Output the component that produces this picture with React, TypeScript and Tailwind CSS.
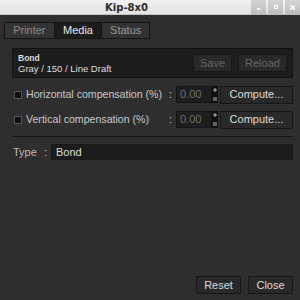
import React from "react";

function Spin({ value }: { value: string }) {
  return (
    <div className="flex h-[17px] shrink-0">
      <div className="w-[36px] h-full bg-[#1e1e1e] border border-[#141414] flex items-center pl-[3px] text-[11px] text-[#6e6e6e]">
        {value}
      </div>
      <div className="w-[6px] h-full bg-[#0e0e0e] flex flex-col items-center justify-between py-[2px]">
        <svg width="4" height="4" viewBox="0 0 4 4"><path d="M0 2H4M2 0V4" stroke="#bbb" strokeWidth="1" /></svg>
        <svg width="4" height="4" viewBox="0 0 4 4"><path d="M0 1H4M0 3H4" stroke="#bbb" strokeWidth="1" /></svg>
      </div>
    </div>
  );
}

function Btn({ children, w, dim }: { children: React.ReactNode; w: string; dim?: boolean }) {
  return (
    <div
      className={`${w} shrink-0 h-[18px] flex items-center justify-center bg-[#292929] border border-[#161616] text-[11px] whitespace-nowrap ${dim ? "text-[#666]" : "text-[#dcdcdc]"}`}
    >
      {children}
    </div>
  );
}

export default function App() {
  return (
    <div
      className="w-[300px] h-[300px] flex flex-col overflow-hidden"
      style={{ fontFamily: '"Liberation Sans", Arial, sans-serif' }}
    >
      {/* title bar */}
      <div className="h-[15px] bg-gradient-to-b from-[#f2f2f2] to-[#e2e2e2] flex items-center border-b border-[#c4c4c4]">
        <div className="flex-1 text-center text-[10px] font-semibold text-[#2a2a2a] pl-[2px]" style={{ fontFamily: '"DejaVu Sans", sans-serif' }}>
          Kip-8x0
        </div>
        <div className="h-[15px] flex gap-[2px]">
          {["min", "max", "close"].map((k) => (
            <div key={k} className="w-[15px] h-[15px] bg-gradient-to-b from-[#d4d4d4] to-[#bcbcbc] flex items-center justify-center">
              {k === "min" && <div className="w-[3px] h-[2px] bg-white mt-[4px]" />}
              {k === "max" && <div className="w-[4px] h-[4px] border border-white" />}
              {k === "close" && (
                <svg width="5" height="5" viewBox="0 0 5 5"><path d="M0 0L5 5M5 0L0 5" stroke="#fff" strokeWidth="1.3" /></svg>
              )}
            </div>
          ))}
        </div>
      </div>

      {/* body */}
      <div className="flex-1 bg-[#2e2e2e] flex flex-col px-[4px] pt-[7px] pb-[6px] text-[#c8c8c8]">
        {/* tabs */}
        <div className="flex w-[146px] h-[17px] border border-[#141414] bg-[#141414] gap-[1px]">
          <div className="w-[49px] flex items-center justify-center bg-[#333] text-[11px] text-[#8a8a8a]">Printer</div>
          <div className="w-[47px] flex items-center justify-center bg-[#1c1c1c] text-[11px] text-[#e8e8e8]">Media</div>
          <div className="w-[47px] flex items-center justify-center bg-[#333] text-[11px] text-[#9a9a9a]">Status</div>
        </div>

        <div className="ml-[8px] mr-[3px] flex flex-col flex-1">
          {/* header box */}
          <div className="mt-[9px] h-[30px] bg-[#1d1d1d] border border-[#111] flex items-center pl-[5px] pr-[5px]">
            <div className="flex-1 flex flex-col leading-[9px]">
              <span className="text-[8.5px] font-bold text-[#ddd]">Bond</span>
              <span className="text-[9.5px] text-[#ddd] mt-[1px]">Gray / 150 / Line Draft</span>
            </div>
            <div className="flex gap-[6px]">
              <Btn w="w-[39px]" dim>Save</Btn>
              <Btn w="w-[49px]" dim>Reload</Btn>
            </div>
          </div>

          {/* rows */}
          <div className="mt-[8px] flex items-center h-[17px]">
            <div className="w-[8px] h-[8px] shrink-0 bg-[#111] border border-[#555] ml-[2px]" />
            <span className="ml-[4px] text-[10.6px] w-[143px] shrink-0 whitespace-nowrap">Horizontal compensation (%)</span>
            <span className="text-[11px] w-[7px] shrink-0">:</span>
            <Spin value="0.00" />
            <div className="ml-[2px]"><Btn w="w-[73px]">Compute...</Btn></div>
          </div>
          <div className="mt-[8px] flex items-center h-[17px]">
            <div className="w-[8px] h-[8px] shrink-0 bg-[#111] border border-[#555] ml-[2px]" />
            <span className="ml-[4px] text-[10.6px] w-[143px] shrink-0 whitespace-nowrap">Vertical compensation (%)</span>
            <span className="text-[11px] w-[7px] shrink-0">:</span>
            <Spin value="0.00" />
            <div className="ml-[2px]"><Btn w="w-[73px]">Compute...</Btn></div>
          </div>

          <div className="mt-[8px] h-[1px] bg-[#141414]" />

          <div className="mt-[7px] flex items-center h-[16px]">
            <span className="ml-[1px] text-[11px] text-[#bbb] w-[31px]">Type</span>
            <span className="text-[11px] w-[7px]">:</span>
            <div className="flex-1 h-[16px] bg-[#1c1c1c] border border-[#191919] flex items-center pl-[4px] text-[11px] text-[#ddd]">
              Bond
            </div>
          </div>

          <div className="flex-1" />

          <div className="flex justify-end gap-[7px]">
            <Btn w="w-[45px]">Reset</Btn>
            <Btn w="w-[45px]">Close</Btn>
          </div>
        </div>
      </div>
    </div>
  );
}
